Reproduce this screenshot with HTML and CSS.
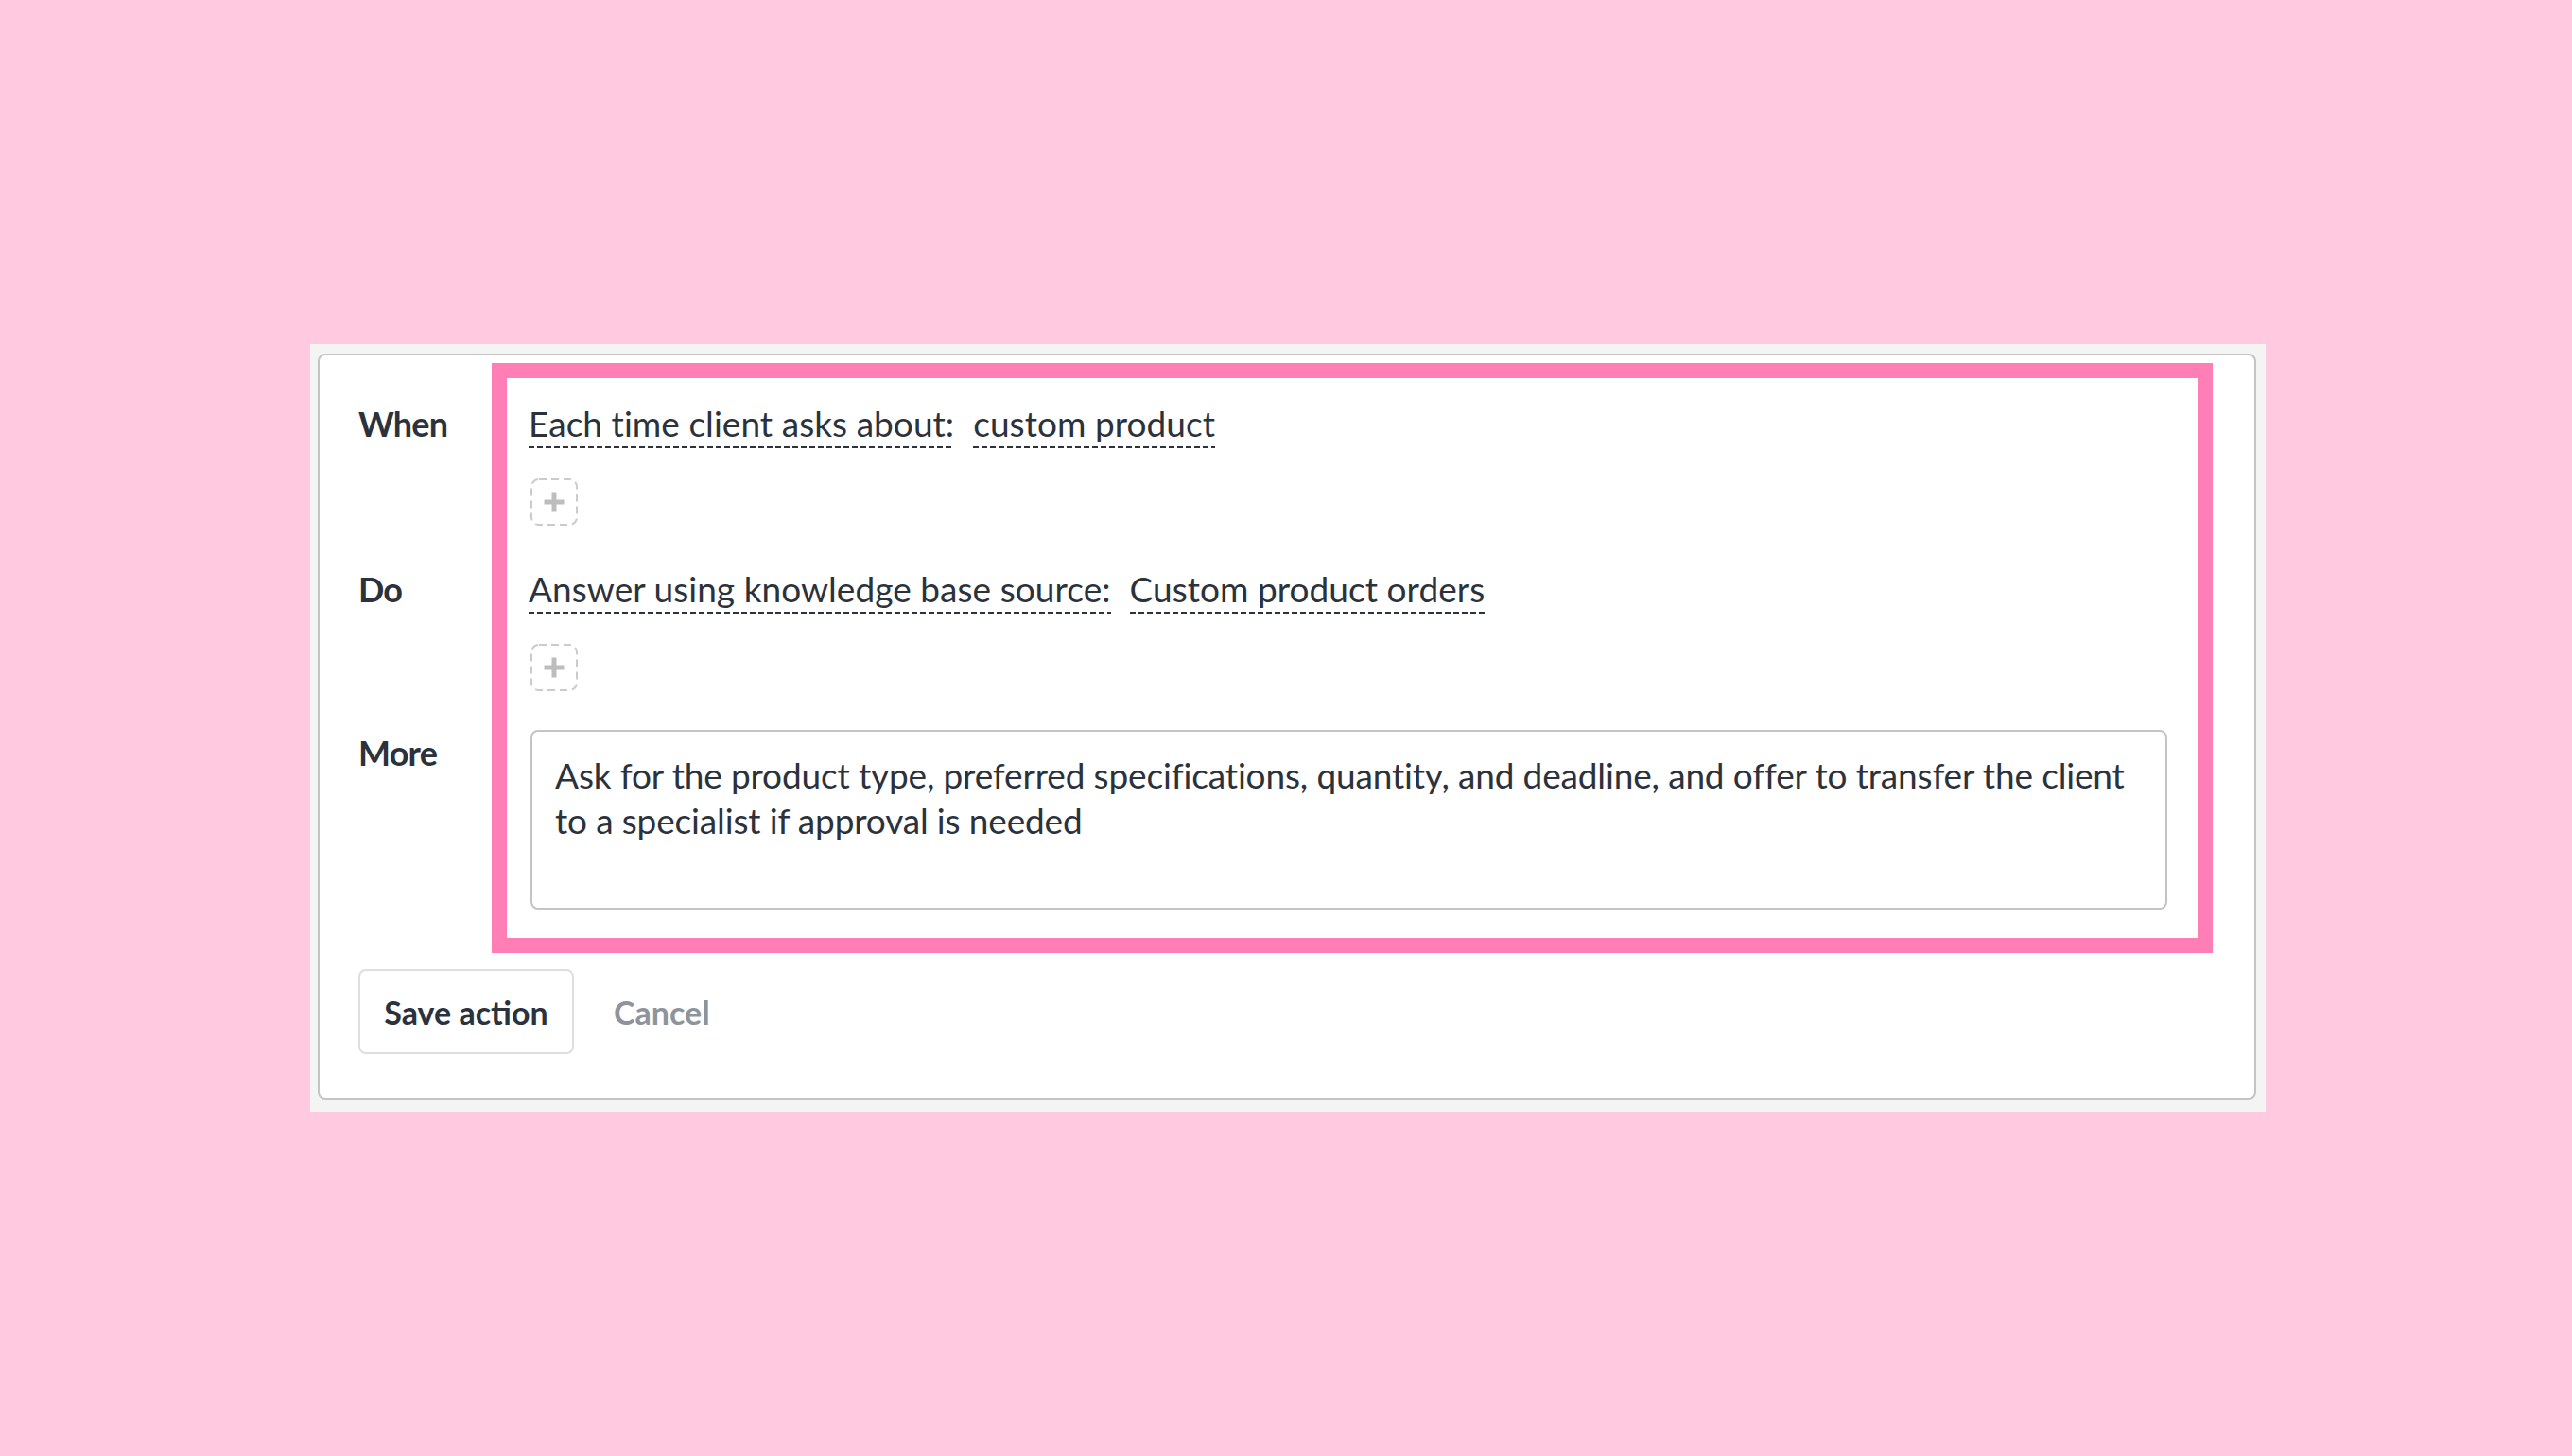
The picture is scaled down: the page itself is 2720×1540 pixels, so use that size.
FILE: index.html
```html
<!DOCTYPE html>
<html lang="en">
<head>
<meta charset="utf-8">
<title>Action editor</title>
<link rel="stylesheet" href="styles.css">
</head>
<body>
<div class="frame">
  <div class="card">
    <div class="grid">
      <div class="highlight"></div>

      <div class="label label-when">When</div>
      <div class="cell cell-when">
        <div class="chips">
          <span class="chip">Each time client asks about:</span>
          <span class="chip">custom product</span>
        </div>
        <button class="add" type="button" aria-label="Add condition">
          <svg width="50" height="50" viewBox="0 0 50 50">
            <rect x="1" y="1" width="48" height="48" rx="8" ry="8" fill="none" stroke="#cbcbcb" stroke-width="2" stroke-dasharray="8 5"/>
            <path d="M25 14.5v21M14.5 25h21" stroke="#bdbdbd" stroke-width="5" fill="none"/>
          </svg>
        </button>
      </div>

      <div class="label label-do">Do</div>
      <div class="cell cell-do">
        <div class="chips">
          <span class="chip">Answer using knowledge base source:</span>
          <span class="chip">Custom product orders</span>
        </div>
        <button class="add" type="button" aria-label="Add action">
          <svg width="50" height="50" viewBox="0 0 50 50">
            <rect x="1" y="1" width="48" height="48" rx="8" ry="8" fill="none" stroke="#cbcbcb" stroke-width="2" stroke-dasharray="8 5"/>
            <path d="M25 14.5v21M14.5 25h21" stroke="#bdbdbd" stroke-width="5" fill="none"/>
          </svg>
        </button>
      </div>

      <div class="label label-more">More</div>
      <div class="cell cell-more">
        <div class="textarea">Ask for the product type, preferred specifications, quantity, and deadline, and offer to transfer the client<br>to a specialist if approval is needed</div>
      </div>

      <div class="actions">
        <button class="btn-save" type="button">Save action</button>
        <button class="btn-cancel" type="button">Cancel</button>
      </div>
    </div>
  </div>
</div>
</body>
</html>
```
FILE: styles.css
```css
html, body {
  margin: 0;
  padding: 0;
}
body {
  background: #ffc9df;
  width: 2720px;
  height: 1540px;
  overflow: hidden;
  font-family: "Lato", "Open Sans", sans-serif;
  font-variant-ligatures: none;
  color: #2c323b;
}
.frame {
  margin: 364px 0 0 328px;
  width: 2068px;
  height: 812px;
  box-sizing: border-box;
  padding: 10px 10px 13px 8px;
  background: #f4f4f4;
}
.card {
  box-sizing: border-box;
  height: 789px;
  border: 2px solid #c4c4c4;
  border-radius: 8px;
  background: #ffffff;
  padding: 8px 0 0 41px;
}
.grid {
  display: grid;
  grid-template-columns: 141px 1820px;
  align-items: start;
}
.highlight {
  grid-column: 2;
  grid-row: 1 / 4;
  align-self: stretch;
  border: 16px solid #ff7eb6;
}
.label {
  grid-column: 1;
  font-size: 36px;
  font-weight: 700;
  letter-spacing: -0.8px;
  line-height: 48px;
}
.label-when { grid-row: 1; padding-top: 40px; }
.label-do { grid-row: 2; }
.label-more { grid-row: 3; padding-top: 0; }

.cell {
  grid-column: 2;
  padding-left: 39px;
  padding-right: 48px;
}
.cell-when { grid-row: 1; padding-top: 40px; padding-bottom: 43px; }
.cell-do { grid-row: 2; padding-bottom: 41px; }
.cell-more { grid-row: 3; padding-bottom: 46px; padding-left: 41px; }

.chips {
  display: flex;
  gap: 20px;
}
.chip {
  font-size: 37px;
  letter-spacing: 0.05px;
  line-height: 48px;
  padding-bottom: 2px;
  background-image: linear-gradient(to right, #2c323b 0 6px, transparent 6px 9px);
  background-size: 9px 2px;
  background-repeat: repeat-x;
  background-position: left bottom;
}
.add {
  display: block;
  margin: 32px 0 0 2px;
  padding: 0;
  width: 50px;
  height: 50px;
  border: 0;
  background: transparent;
}
.add svg { display: block; }

.textarea {
  box-sizing: border-box;
  width: 1731px;
  height: 190px;
  border: 2px solid #c4c4c4;
  border-radius: 8px;
  padding: 22px 20px 0 24px;
  font-size: 37px;
  letter-spacing: -0.15px;
  line-height: 48px;
  white-space: nowrap;
  color: #2c323b;
}

.actions {
  grid-column: 1 / 3;
  grid-row: 4;
  display: flex;
  align-items: center;
  gap: 42px;
  padding-top: 17px;
}
.btn-save {
  box-sizing: border-box;
  height: 90px;
  width: 228px;
  border: 2px solid #dedede;
  border-radius: 8px;
  background: #ffffff;
  font-family: "Lato", "Open Sans", sans-serif;
  font-size: 34px;
  font-weight: 700;
  color: #2c323b;
  padding: 0;
}
.btn-cancel {
  border: 0;
  background: transparent;
  padding: 0;
  font-family: "Lato", "Open Sans", sans-serif;
  font-size: 34px;
  font-weight: 700;
  color: #8e949a;
}
```
